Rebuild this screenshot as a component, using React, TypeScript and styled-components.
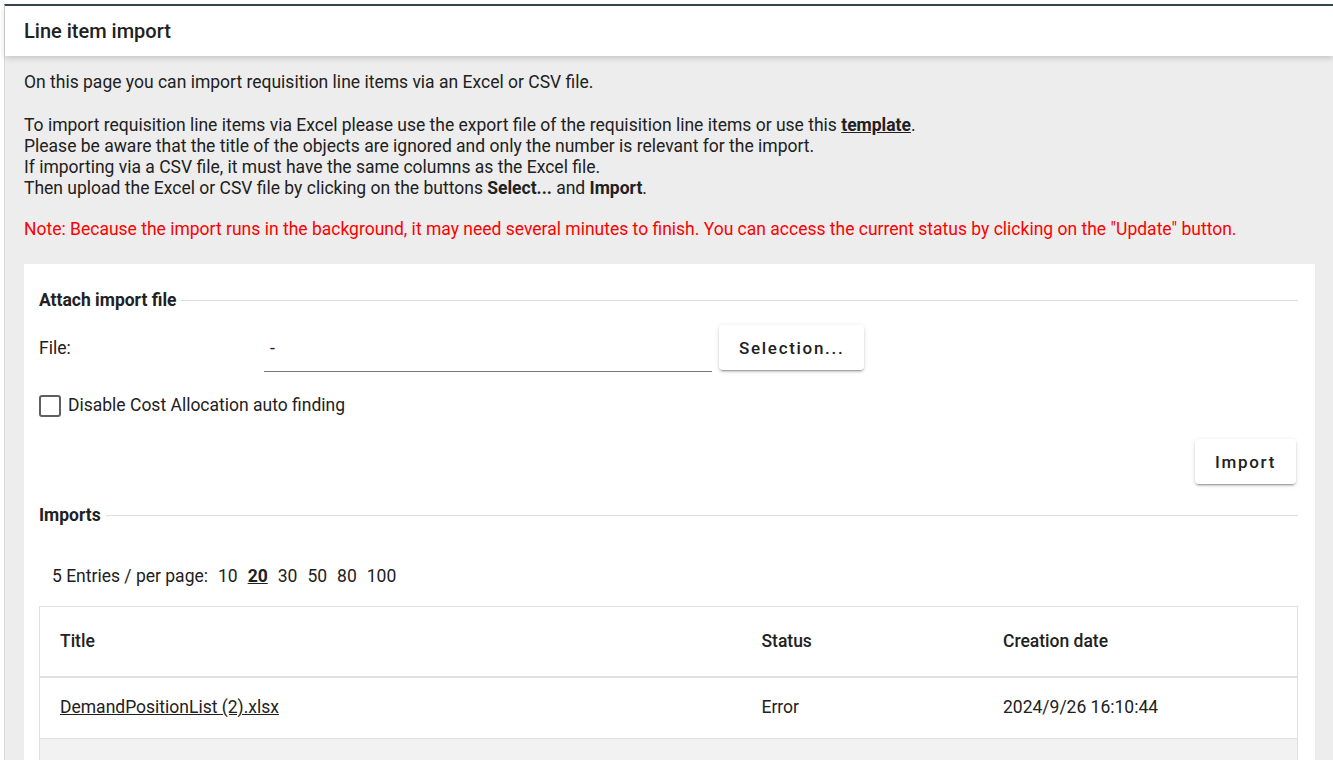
import React from 'react';
import styled, { createGlobalStyle } from 'styled-components';

const GlobalStyle = createGlobalStyle`
  html, body {
    margin: 0;
    padding: 0;
    background: #ffffff;
    font-family: Roboto, 'Liberation Sans', Arial, sans-serif;
    color: #212121;
  }
  * {
    box-sizing: border-box;
  }
`;

const Viewport = styled.div`
  padding: 4px 0 0 4px;
  height: 760px;
  overflow: hidden;
`;

const Frame = styled.div`
  border-top: 2px solid #37474f;
  border-left: 1px solid #dadada;
  background: #ededed;
  min-height: 756px;
`;

const Header = styled.header`
  position: relative;
  z-index: 1;
  height: 50px;
  display: flex;
  align-items: center;
  padding-left: 19px;
  background: #ffffff;
  box-shadow: 0 2px 6px rgba(0, 0, 0, 0.18);
  font-size: 20px;
  font-weight: 500;
`;

const Main = styled.main`
  padding: 16px 18px 0 19px;
  font-size: 17.5px;
  line-height: 21px;
`;

const Paragraph = styled.p<{ $gap?: number }>`
  margin: 0 0 ${({ $gap }) => $gap ?? 22}px;
`;

const Note = styled.p`
  margin: 0 0 24px;
  color: #ff0000;
`;

const TemplateLink = styled.a`
  color: #212121;
  font-weight: 700;
  text-decoration: underline;
`;

const Card = styled.section`
  background: #ffffff;
  padding: 24px 17px 40px 15px;
`;

const Legend = styled.div`
  display: flex;
  align-items: center;
  gap: 5px;
  height: 24px;
  font-weight: 700;
  &::after {
    content: '';
    flex: 1;
    height: 1px;
    background: #dddddd;
  }
`;

const FileRow = styled.div`
  display: flex;
  align-items: center;
  margin-top: 13px;
  height: 47px;
`;

const FieldLabel = styled.span`
  width: 225px;
`;

const FileInput = styled.div`
  width: 448px;
  height: 47px;
  display: flex;
  align-items: center;
  padding-left: 6px;
  border-bottom: 1px solid #777777;
`;

const RaisedButton = styled.button`
  height: 45px;
  padding: 0 20px;
  border: none;
  border-radius: 4px;
  background: #ffffff;
  color: #212121;
  font-family: Roboto, 'Liberation Sans', Arial, sans-serif;
  font-size: 17px;
  font-weight: 500;
  letter-spacing: 1.7px;
  cursor: pointer;
  box-shadow:
    0 3px 1px -2px rgba(0, 0, 0, 0.2),
    0 2px 2px 0 rgba(0, 0, 0, 0.14),
    0 1px 5px 0 rgba(0, 0, 0, 0.12);
`;

const SelectButton = styled(RaisedButton)`
  margin-left: 7px;
  align-self: flex-start;
`;

const CheckRow = styled.label`
  display: flex;
  align-items: center;
  gap: 7px;
  margin-top: 22px;
  height: 23px;
  cursor: pointer;
`;

const CheckBox = styled.span`
  width: 22px;
  height: 22px;
  border: 2px solid #5f5f5f;
  border-radius: 3px;
`;

const ActionRow = styled.div`
  display: flex;
  justify-content: flex-end;
  margin: 22px 2px 19px 0;
`;

const Pager = styled.div`
  display: flex;
  align-items: center;
  gap: 10px;
  margin: 39px 0 19px 13px;
`;

const PageSize = styled.span<{ $active?: boolean }>`
  font-weight: ${({ $active }) => ($active ? 700 : 400)};
  text-decoration: ${({ $active }) => ($active ? 'underline' : 'none')};
  cursor: pointer;
`;

const Table = styled.table`
  width: 100%;
  border-collapse: collapse;
  border: 1px solid #e0e0e0;
  table-layout: fixed;
`;

const HeadCell = styled.th`
  height: 70px;
  padding: 0 20px;
  text-align: left;
  font-weight: 500;
  border-bottom: 2px solid #e0e0e0;
`;

const Row = styled.tr<{ $shaded?: boolean }>`
  background: ${({ $shaded }) => ($shaded ? '#f2f2f2' : '#ffffff')};
`;

const Cell = styled.td`
  height: 62px;
  padding: 0 20px;
  border-bottom: 1px solid #e0e0e0;
`;

const FileLink = styled.a`
  color: #212121;
  text-decoration: underline;
`;

const imports = [
  { title: 'DemandPositionList (2).xlsx', status: 'Error', created: '2024/9/26 16:10:44' },
  { title: '', status: '', created: '' },
];

export default function App() {
  return (
    <Viewport>
      <GlobalStyle />
      <Frame>
        <Header>Line item import</Header>
        <Main>
          <Paragraph>On this page you can import requisition line items via an Excel or CSV file.</Paragraph>
          <Paragraph $gap={20}>
            To import requisition line items via Excel please use the export file of the requisition line items or use this{' '}
            <TemplateLink href="#">template</TemplateLink>.
            <br />
            Please be aware that the title of the objects are ignored and only the number is relevant for the import.
            <br />
            If importing via a CSV file, it must have the same columns as the Excel file.
            <br />
            Then upload the Excel or CSV file by clicking on the buttons <b>Select...</b> and <b>Import</b>.
          </Paragraph>
          <Note>
            Note: Because the import runs in the background, it may need several minutes to finish. You can access the
            current status by clicking on the "Update" button.
          </Note>

          <Card>
            <Legend>Attach import file</Legend>
            <FileRow>
              <FieldLabel>File:</FieldLabel>
              <FileInput>-</FileInput>
              <SelectButton type="button">Selection...</SelectButton>
            </FileRow>
            <CheckRow>
              <CheckBox />
              Disable Cost Allocation auto finding
            </CheckRow>
            <ActionRow>
              <RaisedButton type="button">Import</RaisedButton>
            </ActionRow>

            <Legend>Imports</Legend>
            <Pager>
              <span>5 Entries / per page:</span>
              {[10, 20, 30, 50, 80, 100].map((n) => (
                <PageSize key={n} $active={n === 20}>
                  {n}
                </PageSize>
              ))}
            </Pager>
            <Table>
              <colgroup>
                <col style={{ width: '55.8%' }} />
                <col style={{ width: '19.2%' }} />
                <col />
              </colgroup>
              <thead>
                <tr>
                  <HeadCell>Title</HeadCell>
                  <HeadCell>Status</HeadCell>
                  <HeadCell>Creation date</HeadCell>
                </tr>
              </thead>
              <tbody>
                {imports.map((item, i) => (
                  <Row key={i} $shaded={i % 2 === 1}>
                    <Cell>{item.title && <FileLink href="#">{item.title}</FileLink>}</Cell>
                    <Cell>{item.status}</Cell>
                    <Cell>{item.created}</Cell>
                  </Row>
                ))}
              </tbody>
            </Table>
          </Card>
        </Main>
      </Frame>
    </Viewport>
  );
}
